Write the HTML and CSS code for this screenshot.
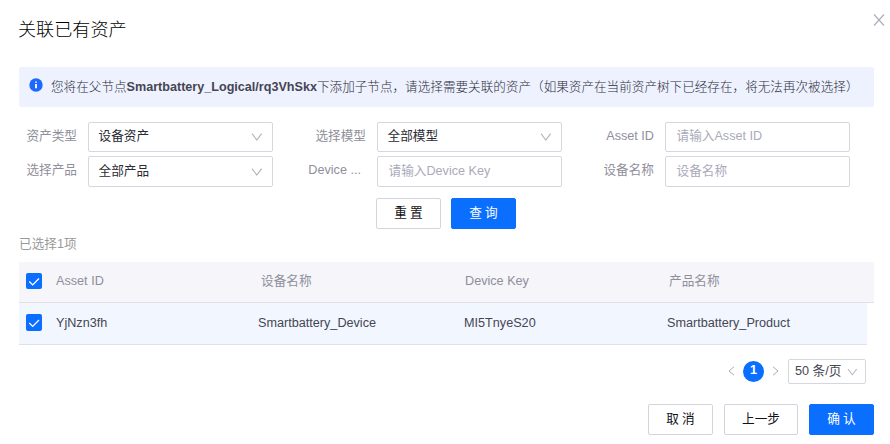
FILE: index.html
```html
<!DOCTYPE html>
<html lang="zh-CN">
<head>
<meta charset="utf-8">
<title>关联已有资产</title>
<link rel="stylesheet" href="styles.css">
</head>
<body>
<main class="dialog">
  <header class="head">
    <h1>关联已有资产</h1>
    <svg class="close" viewBox="0 0 12 12"><path d="M1 .5 11 11.5M11 .5 1 11.5"/></svg>
  </header>
  <div class="alert">
    <svg class="info" viewBox="0 0 14 14"><circle cx="7" cy="7" r="6.7"/><path d="M7 6v4.2M7 3.5v1.3"/></svg>
    <p>您将在父节点<b>Smartbattery_Logical/rq3VhSkx</b>下添加子节点，请选择需要关联的资产（如果资产在当前资产树下已经存在，将无法再次被选择）</p>
  </div>
  <form class="filters">
    <label>资产类型</label>
    <div class="field"><span>设备资产</span><svg class="arrow" viewBox="0 0 12 8"><path d="M1 .7 5.8 7 10.600 .7"/></svg></div>
    <label>选择模型</label>
    <div class="field"><span>全部模型</span><svg class="arrow" viewBox="0 0 12 8"><path d="M1 .7 5.8 7 10.600 .7"/></svg></div>
    <label>Asset ID</label>
    <div class="field hint"><span>请输入Asset ID</span></div>
    <label>选择产品</label>
    <div class="field"><span>全部产品</span><svg class="arrow" viewBox="0 0 12 8"><path d="M1 .7 5.8 7 10.600 .7"/></svg></div>
    <label class="cut">Device ...</label>
    <div class="field hint"><span>请输入Device Key</span></div>
    <label>设备名称</label>
    <div class="field hint"><span>设备名称</span></div>
  </form>
  <div class="actions">
    <button class="btn wide">重置</button>
    <button class="btn wide primary">查询</button>
  </div>
  <p class="count">已选择1项</p>
  <section class="table">
    <div class="row thead">
      <svg class="check" viewBox="0 0 16 16"><path d="m3.300 8.500 3.400 3.400 6.300-6.400"/></svg>
      <span>Asset ID</span><span>设备名称</span><span>Device Key</span><span>产品名称</span>
    </div>
    <div class="row item">
      <svg class="check" viewBox="0 0 16 16"><path d="m3.300 8.500 3.400 3.400 6.300-6.400"/></svg>
      <span>YjNzn3fh</span><span>Smartbattery_Device</span><span>MI5TnyeS20</span><span>Smartbattery_Product</span>
    </div>
  </section>
  <nav class="pager">
    <svg class="step" viewBox="0 0 7 10"><path d="M6 .8 1 5l5 4.200"/></svg>
    <span class="page">1</span>
    <svg class="step next" viewBox="0 0 7 10"><path d="m1 .8 5 4.200-5 4.200"/></svg>
    <div class="size"><span>50 条/页</span><svg class="arrow" viewBox="0 0 12 8"><path d="M1 .7 5.8 7 10.600 .7"/></svg></div>
  </nav>
  <footer class="foot">
    <button class="btn wide">取消</button>
    <button class="btn prev">上一步</button>
    <button class="btn wide primary">确认</button>
  </footer>
</main>
</body>
</html>
```
FILE: styles.css
```css
* { box-sizing: border-box; }
body {
  margin: 0;
  background: #fff;
  font: 400 12.65px/20px "Liberation Sans", "Noto Sans CJK SC", sans-serif;
  color: #454553;
}
h1, p { margin: 0; }
svg { display: block; flex: none; fill: none; }
.dialog { width: 890px; height: 444px; padding: 0 16px 0 19px; overflow: hidden; }
.head { display: flex; justify-content: space-between; height: 67px; margin-right: -11px; }
h1 { padding-top: 17px; margin-left: -1px; font-size: 18.1px; line-height: 26px; font-weight: 300; color: #000; }
.close { width: 12px; height: 12px; margin-top: 14px; stroke: #aeaeb9; stroke-width: 1.2; }
.alert {
  display: flex; width: 855px; height: 40px; padding: 10px 0 0 10px;
  background: #eef2ff; border-radius: 2px; white-space: nowrap; font-size: 12.6px;
}
.alert p { font-weight: 300; color: #2c2c3a; }
.info { width: 14px; height: 14px; margin: 1px 8px 0 0; stroke: #fff; stroke-width: 1.8; }
.info circle { fill: #1f68ff; stroke: none; }
.alert b { font-weight: 700; color: #454553; }
.filters {
  display: grid; grid-template-columns: 69px 185px 104px 185px 103px 185px;
  grid-template-rows: 30px 31px; row-gap: 4px; margin-top: 15px;
}
.filters label { padding: 4px 11px 0 0; text-align: right; color: #8f8f9c; white-space: nowrap; }
.filters .cut { padding-right: 16px; }
.field {
  display: flex; align-items: center; justify-content: space-between;
  padding: 0 9px 2px 9.5px; border: 1px solid #d6d6e1; border-radius: 2px; color: #2a2a33;
}
.hint { padding-left: 10.5px; color: #aaaaba; }
.arrow { width: 12px; height: 8px; margin-top: 2px; stroke: #b3b3bf; stroke-width: 1.1; }
.actions { display: flex; gap: 10px; margin: 11px 0 0 357px; }
.btn {
  height: 31px; padding: 0 0 2px; border: 1px solid #d4d4df; border-radius: 2px;
  background: #fff; color: #111118; font: inherit;
}
.wide { width: 65px; letter-spacing: 3px; padding-left: 3px; }
.prev { width: 74px; }
.primary { background: #0a6eff; border-color: #0a6eff; color: #fff; }
.count { margin-top: 5px; height: 28px; color: #999; }
.row {
  display: grid; grid-template-columns: 37px 205px 204px 204px 1fr; align-items: start;
  border-bottom: 1px solid #e0e0ea;
}
.check { width: 16px; height: 16px; margin-left: 7px; background: #0a6eff; border-radius: 2px; stroke: #fff; stroke-width: 1.3; }
.thead { width: 855px; height: 41px; padding-top: 11px; background: #f5f5fa; color: #8f8f9c; }
.thead span { margin-top: -2px; }
.item { width: 848px; height: 42px; padding-top: 12px; background: #f2f7ff; grid-template-columns: 37px 202px 206px 203px 1fr; }
.item .check { margin-top: -1px; height: 17px; }
.item span { margin-top: -2px; }
.pager { display: flex; align-items: center; height: 25px; margin: 14px 0 0 709px; }
.step { width: 7px; height: 10px; stroke: #aaaab5; stroke-width: 1; margin-top: -2px; }
.page {
  width: 21px; height: 21px; margin: 0 8px; border-radius: 50%; background: #0a6eff;
  color: #fff; font-weight: 700; line-height: 18px; text-align: center;
}
.size {
  display: flex; align-items: center; justify-content: space-between; width: 78px; height: 25px;
  margin-left: 9px; padding: 0 7px 2px 6px; border: 1px solid #d6d6e1; border-radius: 2px; white-space: nowrap;
}
.size .arrow { width: 11px; }
.foot { display: flex; gap: 11px; margin: 20px 0 0 629px; }
```
